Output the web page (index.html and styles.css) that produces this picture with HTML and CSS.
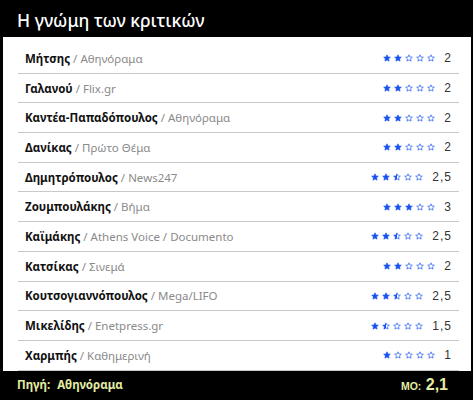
FILE: index.html
```html
<!DOCTYPE html>
<html lang="el">
<head>
    <meta charset="UTF-8">
    <title>Η γνώμη των κριτικών</title>
    <link rel="stylesheet" href="styles.css">
</head>
<body>
    <svg class="defs" width="0" height="0">
        <defs>
            <linearGradient id="half">
                <stop offset="50%" stop-color="#1652f0"/>
                <stop offset="50%" stop-color="#fff"/>
            </linearGradient>
            <symbol id="star" viewBox="0 0 24 24">
                <path d="M12 2.5l2.9 6.6 7.1.6-5.4 4.7 1.6 7-6.2-3.7-6.2 3.7 1.6-7L2 9.7l7.1-.6z"/>
            </symbol>
        </defs>
    </svg>

    <h1 class="title">Η γνώμη των κριτικών</h1>

    <div class="panel" id="list"></div>

    <div class="footer">
        <span class="source"><b>Πηγή:</b> <b class="name">Αθηνόραμα</b></span>
        <span class="avg"><small>ΜΟ:</small> 2,1</span>
    </div>

    <script>
        const critics = [
            ["Μήτσης", "Αθηνόραμα", 2],
            ["Γαλανού", "Flix.gr", 2],
            ["Καντέα-Παπαδόπουλος", "Αθηνόραμα", 2],
            ["Δανίκας", "Πρώτο Θέμα", 2],
            ["Δημητρόπουλος", "News247", 2.5],
            ["Ζουμπουλάκης", "Βήμα", 3],
            ["Καϊμάκης", "Athens Voice / Documento", 2.5],
            ["Κατσίκας", "Σινεμά", 2],
            ["Κουτσογιαννόπουλος", "Mega/LIFO", 2.5],
            ["Μικελίδης", "Enetpress.gr", 1.5],
            ["Χαρμπής", "Καθημερινή", 1]
        ];

        function stars(score) {
            let out = "";
            for (let i = 1; i <= 5; i++) {
                let cls = "empty";
                if (score >= i) cls = "full";
                else if (score >= i - 0.5) cls = "half";
                out += `<svg class="star ${cls}"><use href="#star"/></svg>`;
            }
            return out;
        }

        document.getElementById("list").innerHTML = critics.map(c => `
            <div class="row">
                <div class="who"><b>${c[0]}</b> / ${c[1]}</div>
                <div class="stars">${stars(c[2])}</div>
                <div class="score">${String(c[2]).replace(".", ",")}</div>
            </div>
        `).join("");
    </script>
</body>
</html>
```

FILE: styles.css
```css
body {
    margin: 0;
    background: #000;
    font-family: "Noto Sans", sans-serif;
    width: 473px;
    height: 400px;
    overflow: hidden;
}

.defs {
    position: absolute;
}

.title {
    margin: 0;
    height: 37px;
    line-height: 40px;
    padding-left: 17px;
    color: #fff;
    font-size: 17.5px;
    font-weight: 500;
}

.panel {
    background: #fff;
    margin: 0 2px 0 3px;
    padding: 7px 12px 0 15px;
}

.row {
    display: flex;
    align-items: center;
    height: 28.7px;
    padding: 0 7px 0 7px;
    border-bottom: 1px solid #c8c8c8;
}

.who {
    flex: 1;
    font-size: 11.5px;
    color: #8a8a8a;
}

.who b {
    color: #111;
    font-weight: 700;
}

.stars {
    display: flex;
    gap: 3px;
}

.star {
    width: 8px;
    height: 8px;
    stroke: #1652f0;
    stroke-width: 2;
}

.star.full {
    fill: #1652f0;
}

.star.empty {
    fill: #fff;
}

.star.half {
    fill: url(#half);
}

.score {
    min-width: 6px;
    margin-left: 9px;
    text-align: right;
    font-family: "Liberation Sans", sans-serif;
    font-size: 12px;
    letter-spacing: 1px;
    color: #333;
}

.footer {
    display: flex;
    justify-content: space-between;
    align-items: center;
    height: 28px;
    padding: 0 25px 0 17px;
    color: #e3eca4;
}

.source {
    font-size: 11.5px;
}

.source .name {
    margin-left: 4px;
}

.avg {
    font-size: 16px;
    font-weight: 700;
    font-family: "Liberation Sans", sans-serif;
}

.avg small {
    font-size: 10.5px;
}
```
